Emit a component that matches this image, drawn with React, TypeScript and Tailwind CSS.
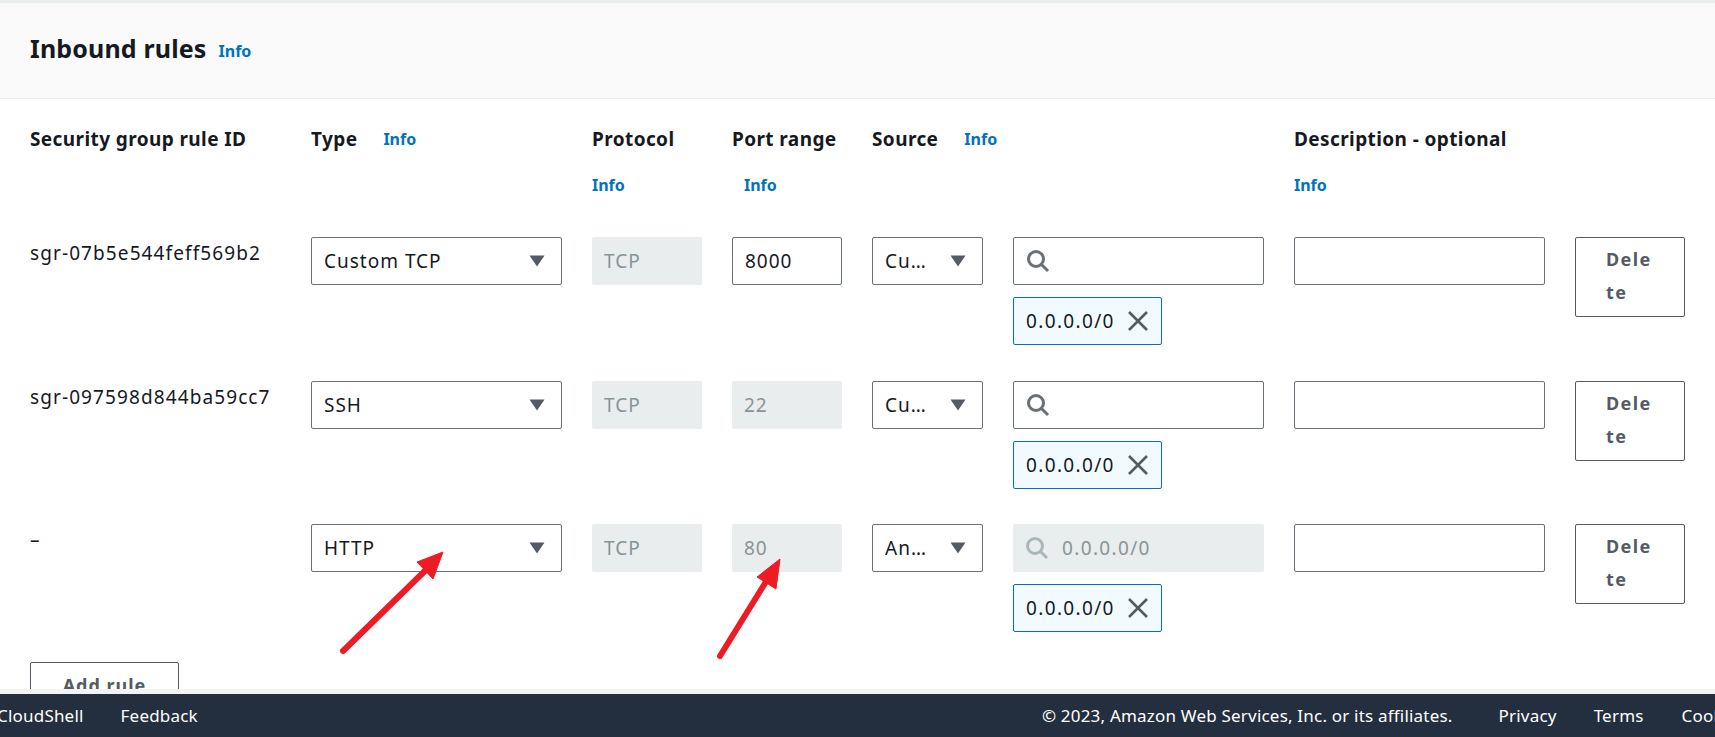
const Info = ({ className = '' }: { className?: string }) => (
  <a className={`text-[16px] font-bold leading-[22px] tracking-normal text-[#0073bb] ${className}`}>Info</a>
);

const Caret = () => (
  <svg width="16" height="12" viewBox="0 0 16 12" className="shrink-0">
    <path d="M0.5 0.5 H15.5 L8 11.5 Z" fill="#545b64" />
  </svg>
);

const SearchIcon = ({ color }: { color: string }) => (
  <svg width="24" height="24" viewBox="0 0 24 24" fill="none" stroke={color} strokeWidth="3" className="shrink-0">
    <circle cx="10" cy="10" r="7.5" />
    <path d="M15.5 15.5 L22 22" />
  </svg>
);

const CloseIcon = () => (
  <svg width="20" height="20" viewBox="0 0 20 20" fill="none" stroke="#545b64" strokeWidth="2.6" className="shrink-0">
    <path d="M1 1 L19 19 M19 1 L1 19" />
  </svg>
);

const Select = ({ value }: { value: string }) => (
  <div className="flex h-12 w-full items-center justify-between rounded-[2px] border border-[#687078] bg-white pl-3 pr-[16px]">
    <span className="truncate">{value}</span>
    <Caret />
  </div>
);

const Field = ({ value, disabled }: { value?: string; disabled?: boolean }) =>
  disabled ? (
    <div className="flex h-12 w-full items-center rounded-[2px] bg-[#eaeded] px-3 text-[#879596]">{value}</div>
  ) : (
    <div className="flex h-12 w-full items-center rounded-[2px] border border-[#687078] bg-white px-3">{value}</div>
  );

const Tag = () => (
  <div className="mt-3 flex h-12 w-[149px] items-center justify-between rounded-[2px] border border-[#0073bb] bg-[#f1faff] pl-3 pr-[13px]">
    <span className="tracking-[1.35px]">0.0.0.0/0</span>
    <CloseIcon />
  </div>
);

const rules = [
  { id: 'sgr-07b5e544feff569b2', type: 'Custom TCP', port: '8000', portDisabled: false, source: 'Cu…', anywhere: false },
  { id: 'sgr-097598d844ba59cc7', type: 'SSH', port: '22', portDisabled: true, source: 'Cu…', anywhere: false },
  { id: '–', type: 'HTTP', port: '80', portDisabled: true, source: 'An…', anywhere: true },
];

const Row = ({ rule }: { rule: (typeof rules)[number] }) => (
  <div className="grid h-[143.5px] grid-cols-[251px_251px_110px_110px_111px_251px_251px_110px] gap-x-[30px]">
    <div className="whitespace-nowrap pt-[4px] tracking-[1.1px]">{rule.id}</div>
    <Select value={rule.type} />
    <Field value="TCP" disabled />
    <Field value={rule.port} disabled={rule.portDisabled} />
    <Select value={rule.source} />
    <div>
      {rule.anywhere ? (
        <div className="flex h-12 w-full items-center gap-[13px] rounded-[2px] bg-[#eaeded] px-3 text-[#879596]">
          <SearchIcon color="#aab7b8" />
          <span className="tracking-[1.35px]">0.0.0.0/0</span>
        </div>
      ) : (
        <div className="flex h-12 w-full items-center rounded-[2px] border border-[#687078] bg-white px-3">
          <SearchIcon color="#687078" />
        </div>
      )}
      <Tag />
    </div>
    <Field />
    <div className="h-20 w-[110px] rounded-[2px] border border-[#545b64] bg-white px-[30px] py-[5px] text-[18px] font-bold leading-[33px] tracking-[1.4px] text-[#545b64]">
      Dele<br />te
    </div>
  </div>
);

export default function App() {
  return (
    <div className="relative flex h-[737px] w-full flex-col overflow-hidden bg-white font-['Noto_Sans',sans-serif] text-[19px] leading-[24px] tracking-[1px] text-[#16191f]">
      <header className="flex h-[99px] shrink-0 items-center gap-3 border-t-[3px] border-b border-[#eaeded] bg-[#fafafa] px-[30px] pb-[6px]">
        <h2 className="text-[25px] font-bold leading-[30px] tracking-[0.15px]">Inbound rules</h2>
        <Info className="mt-[7px]" />
      </header>

      <main className="min-h-0 flex-1 overflow-hidden px-[30px]">
        <div className="grid h-[138px] grid-cols-[251px_251px_110px_110px_111px_251px_251px_110px] gap-x-[30px] pt-[28px] text-[19px] font-bold leading-[24px] tracking-[0.4px]">
          <div className="whitespace-nowrap">Security group rule ID</div>
          <div className="flex gap-[26px]">Type <Info className="mt-[1px]" /></div>
          <div className="whitespace-nowrap">Protocol<div className="mt-[21px]"><Info /></div></div>
          <div className="whitespace-nowrap">Port range<div className="mt-[21px] pl-3"><Info /></div></div>
          <div className="flex gap-[26px] whitespace-nowrap">Source <Info className="mt-[1px]" /></div>
          <div />
          <div className="whitespace-nowrap">Description - optional<div className="mt-[21px]"><Info /></div></div>
          <div />
        </div>
        {rules.map((rule) => (
          <Row key={rule.id} rule={rule} />
        ))}
        <div className="mt-[-6px] flex h-12 w-[149px] items-center justify-center rounded-[2px] border border-[#545b64] pb-[2px] text-[18px] font-bold text-[#545b64]">
          Add rule
        </div>
      </main>

      <footer className="flex h-[48px] shrink-0 items-center border-t-[5px] border-[#f2f3f3] bg-[#232f3e] text-[17px] tracking-[0.2px] text-white">
        <div className="ml-[-3px] flex items-center whitespace-nowrap">
          <span>CloudShell</span>
          <span className="ml-[37px]">Feedback</span>
          <span className="ml-[844px]">© 2023, Amazon Web Services, Inc. or its affiliates.</span>
          <span className="ml-[46px]">Privacy</span>
          <span className="ml-[37px]">Terms</span>
          <span className="ml-[38px]">Cookie</span>
        </div>
      </footer>

      {/* Red annotation arrows */}
      <svg className="pointer-events-none absolute inset-0" width="1715" height="737" fill="none">
        <path d="M343 651 L432 564" stroke="#ed1c24" strokeWidth="6" strokeLinecap="round" />
        <path d="M443 552 L417 562 L433 579 Z" fill="#ed1c24" stroke="#ed1c24" strokeWidth="1" />
        <path d="M720 656 L772 572" stroke="#ed1c24" strokeWidth="6" strokeLinecap="round" />
        <path d="M780 559 L757 577 L776 589 Z" fill="#ed1c24" stroke="#ed1c24" strokeWidth="1" />
      </svg>
    </div>
  );
}
